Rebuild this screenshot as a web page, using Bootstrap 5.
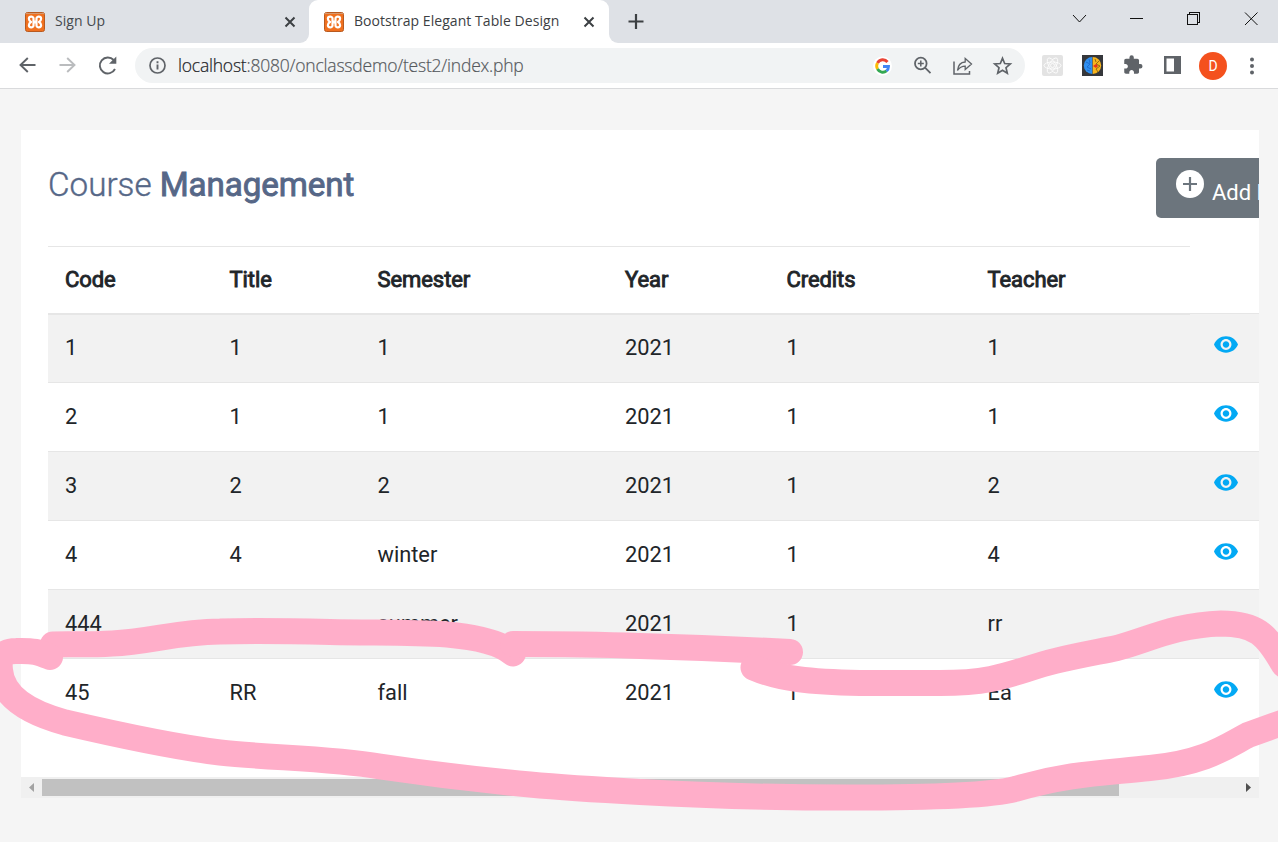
<!DOCTYPE html>
<html lang="en">
<head>
<meta charset="utf-8">
<title>Bootstrap Elegant Table Design</title>
<link href="https://cdn.jsdelivr.net/npm/bootstrap@5.3.0/dist/css/bootstrap.min.css" rel="stylesheet">
<style>
  html, body { height: 100%; }
  body { background: #f5f5f5; overflow: hidden; font-family: Roboto, sans-serif; color: #212529; }
  svg { display: block; flex: none; }
  .tabstrip { height: 43px; background: #dee1e6; font: 14px/20px "Open Sans", "Noto Sans", sans-serif; color: #45494d; }
  .tab-item { height: 43px; padding-top: 1px; }
  .tab-first { width: 309px; padding-left: 25px; padding-right: 13px; border-radius: 0 0 9px 0; }
  .tab-active { width: 300px; padding-left: 15px; padding-right: 14px; background: #fff; border-radius: 9px 9px 0 0; color: #3c4043; }
  .tab-foot { background: #fff; }
  .tab-foot-r { background: #fff; flex: 1; }
  .tab-rest { height: 43px; background: #dee1e6; border-radius: 0 0 0 9px; padding-left: 19px; }
  .tab-label { margin: -2px 0 0 10px; white-space: nowrap; letter-spacing: .06px; }
  .toolbar { height: 46px; background: #fff; border-bottom: 1px solid #d9dadc; padding-left: 18px; }
  .omnibox { width: 890px; height: 35px; border-radius: 18px; background: #f1f3f4; margin-left: 16px; padding: 0 12px 0 14px; }
  .url { font: 300 17.5px/24px "Open Sans", "Noto Sans", sans-serif; letter-spacing: -.21px; color: #55595d; margin: -1px 0 0 12px; white-space: nowrap; -webkit-text-stroke: .2px currentColor; }
  .url b { font-weight: 300; color: #202124; }
  .avatar { width: 28px; height: 28px; border-radius: 50%; background: #f4511e; color: #fff; font: 14px/28px Roboto, sans-serif; }
  .panel { width: 1238px; margin: 41px 0 0 21px; overflow: hidden; }
  .panel-body { height: 647px; padding: 28px 0 0 27px; background: #fff; overflow: hidden; }
  .title-row { height: 88px; width: 1300px; }
  .title-row h2 { font-size: 33.2px; line-height: 41px; color: #566787; margin: 6px 0 0 0; width: 1108px; white-space: nowrap; font-weight: 300; -webkit-text-stroke: .4px currentColor; }
  .title-row h2 b, .course-table th { font-weight: 400; -webkit-text-stroke: .9px currentColor; }
  .title-row h2 b { letter-spacing: -.1px; }
  .add-btn { width: 170px; height: 60px; background: #6c757d; border-radius: 5px; color: #fff; font-size: 22px; line-height: 30px; padding: 12px 0 0 20px; }
  .add-btn span { margin: 8px 0 0 8px; white-space: nowrap; }
  .course-table { table-layout: fixed; width: 1290px; font-size: 21.8px; line-height: 30px; margin: 0; border-collapse: separate; border-spacing: 0; }
  .course-table th, .course-table td { padding: 0 0 0 17px; vertical-align: middle; border: 0; border-top: 1px solid #e6e6e6; }
  .course-table thead th { height: 67px; font-size: 22px; letter-spacing: -.08px; }
  .course-table thead th:last-child { border-top-color: transparent; }
  .course-table td { height: 69px; }
  .course-table tbody tr:first-child td:not(:last-child) { border-top-width: 2px; padding-bottom: 2px; }
  .course-table tbody tr:nth-child(odd) td { background: #f2f2f2; }
  .course-table td svg { margin: -8px 0 0 7px; }
  .hscroll { height: 21px; background: #f0f0f0; }
  .thumb { width: 1077px; height: 17px; background: #c1c1c1; }
  .marker { left: 0; top: 0; pointer-events: none; }
</style>
</head>
<body>
<svg width="0" height="0" class="position-absolute">
  <defs>
    <symbol id="xampp" viewBox="0 0 20 20">
      <rect x=".5" y=".5" width="19" height="19" rx="2" fill="#f0701f" stroke="#b85a20"/>
      <path d="M1 1.500h18" stroke="#d79a70"/>
      <path d="M8.500 9.500V6.500C8.500 4 3.900 4.100 3.900 6.800c0 1.700 1 2.600 2.200 3.200-1.200.6-2.200 1.500-2.200 3.200 0 2.700 4.600 2.800 4.600.3V10.500h3v3c0 2.500 4.600 2.400 4.600-.3 0-1.700-1-2.600-2.200-3.200 1.200-.6 2.200-1.500 2.200-3.200 0-2.700-4.600-2.800-4.600-.3v3z" fill="none" stroke="#fff" stroke-width="2.200" stroke-linecap="round" stroke-linejoin="round"/>
    </symbol>
    <symbol id="cross" viewBox="0 0 12 12"><path d="M1.500 1.500l9 9m0-9l-9 9" stroke="#3c4043" stroke-width="2"/></symbol>
    <symbol id="eye" viewBox="1 4.500 22 15"><path fill="#03a9f4" d="M12 4.500C7 4.500 2.730 7.610 1 12c1.730 4.390 6 7.500 11 7.500s9.270-3.110 11-7.500c-1.730-4.390-6-7.500-11-7.500zM12 17c-2.760 0-5-2.240-5-5s2.240-5 5-5 5 2.240 5 5-2.240 5-5 5zm0-8c-1.660 0-3 1.340-3 3s1.340 3 3 3 3-1.340 3-3-1.340-3-3-3z"/></symbol>
  </defs>
</svg>

<header>
  <div class="tabstrip d-flex">
    <div class="tab-foot"><div class="tab-item tab-first d-flex align-items-center tabstrip">
      <svg width="20" height="20"><use href="#xampp"/></svg><span class="tab-label">Sign Up</span>
      <svg class="ms-auto" width="12" height="12"><use href="#cross"/></svg>
    </div></div>
    <div class="tab-item tab-active d-flex align-items-center">
      <svg width="20" height="20"><use href="#xampp"/></svg><span class="tab-label">Bootstrap Elegant Table Design</span>
      <svg class="ms-auto" width="12" height="12"><use href="#cross"/></svg>
    </div>
    <div class="tab-foot-r">
      <div class="tab-rest d-flex">
        <svg width="16" height="43" viewBox="0 0 16 43"><path d="M8 14v15M.5 21.500h15" stroke="#3c4043" stroke-width="2.200"/></svg>
        <svg class="ms-auto" width="206" height="43" viewBox="1072 0 206 43" fill="none" stroke="#111">
          <path d="M1073 15l6.500 7 6.500-7M1245 12.500l12.500 12.500m0-12.500L1245 25"/>
          <path d="M1130 18.500h13M1187.500 14.500h10v10h-10zM1189.500 14.500v-2h10v10h-2" shape-rendering="crispEdges"/>
        </svg>
      </div>
    </div>
  </div>

  <div class="toolbar d-flex align-items-center">
    <svg width="101" height="44" viewBox="18 44 101 44" fill="none" stroke="#5f6368" stroke-width="1.900">
      <path d="M35.500 65H21m6.800-7L20.500 65l7.300 7"/>
      <path d="M59.500 65H74m-6.800-7l7.300 7-7.300 7" stroke="#babcbe"/>
      <path d="M115 69a8 8 0 1 1-1.300-9"/><path d="M116.300 56.500v7.300H109z" fill="#5f6368" stroke="none"/>
    </svg>
    <div class="omnibox d-flex align-items-center">
      <svg width="17" height="17" viewBox="0 0 17 17"><circle cx="8.500" cy="8.500" r="7.500" fill="none" stroke="#5f6368" stroke-width="1.700"/><path d="M8.500 7.500v5M8.500 4.200v2" stroke="#5f6368" stroke-width="1.900"/></svg>
      <span class="url"><b>localhost</b>:8080/onclassdemo/test2/index.php</span>
      <svg class="ms-auto" width="140" height="34" viewBox="873 49 140 34">
        <circle cx="882.500" cy="66" r="9.500" fill="#fff"/>
        <g fill="none" stroke-width="2.900"><path d="M887.500 62a6 6 0 0 0-10 1" stroke="#ea4335"/><path d="M877.500 63a6 6 0 0 0 0 6" stroke="#fbbc05"/><path d="M877.500 69a6 6 0 0 0 9 1.900" stroke="#34a853"/><path d="M886.500 71a6 6 0 0 0 2-4.500H883" stroke="#4285f4"/></g>
        <g fill="none" stroke="#5f6368" stroke-width="1.800">
          <circle cx="920.800" cy="63.500" r="5.800"/><path d="M925 67.700l5.500 5.500"/><path d="M917.800 63.500h6m-3-3v6" stroke-width="1.500"/>
          <path d="M954 61.500v12.500h15.500v-3" stroke-width="1.500"/><path d="M957.500 70.500c.5-5.500 3.500-8.300 7.700-8.500v-3.500l6.300 5.500-6.300 5.500v-3.300c-3.500 0-5.700 1.300-7.700 4.300z" stroke-width="1.300"/>
          <path d="M1002.500 58.300l2.200 5.200 5.600.5-4.300 3.700 1.300 5.500-4.800-2.900-4.800 2.900 1.300-5.500-4.300-3.700 5.600-.5z" stroke-width="1.700"/>
        </g>
      </svg>
    </div>
    <svg width="174" height="34" viewBox="1025 49 174 34">
      <rect x="1042" y="55" width="21" height="21" rx="2" fill="#e3e3e3"/>
      <g fill="none" stroke="#fff" stroke-width=".8"><ellipse cx="1052.500" cy="65.500" rx="8.500" ry="3.500"/><ellipse cx="1052.500" cy="65.500" rx="8.500" ry="3.500" transform="rotate(60 1052.500 65.500)"/><ellipse cx="1052.500" cy="65.500" rx="8.500" ry="3.500" transform="rotate(120 1052.500 65.500)"/><circle cx="1052.500" cy="65.500" r="2"/></g>
      <rect x="1082" y="55" width="21" height="21" fill="#35373b"/>
      <path d="M1092.300 57a8.500 8.500 0 0 0 0 17z" fill="#2f8ff0"/><path d="M1092.700 57a8.500 8.500 0 0 1 0 17z" fill="#f8b51c"/>
      <path d="M1086 62l4 2-3 3 4 2M1089 59l1 4M1087 70l3 1" fill="none" stroke="#1a66c8" stroke-width=".8"/>
      <path d="M1099 61l-3 3 4 2-4 3 2 3M1095 59l1 3" fill="none" stroke="#7a5a10" stroke-width=".8"/><path d="M1093 66l3-2 2 2-2 2z" fill="#e8341c"/>
      <path transform="translate(1122.500 54.500) scale(.87)" fill="#5f6368" d="M20.500 11H19V7c0-1.100-.9-2-2-2h-4V3.500a2.500 2.500 0 0 0-5 0V5H4c-1.100 0-1.990.9-1.990 2v3.800H3.500c1.490 0 2.700 1.210 2.700 2.700s-1.210 2.700-2.700 2.700H2V20c0 1.100.9 2 2 2h3.800v-1.500c0-1.490 1.210-2.700 2.700-2.700s2.700 1.210 2.700 2.700V22H17c1.100 0 2-.9 2-2v-4h1.500a2.500 2.500 0 0 0 0-5z"/>
      <path d="M1164 56h17v18h-17zM1166.500 58.500v13h7.500v-13z" fill="#5f6368" fill-rule="evenodd"/>
    </svg>
    <div class="avatar text-center">D</div>
    <svg class="ms-auto me-4" width="4" height="18" viewBox="0 0 4 18" fill="#5f6368"><circle cx="2" cy="2.500" r="2"/><circle cx="2" cy="9" r="2"/><circle cx="2" cy="15.500" r="2"/></svg>
  </div>
</header>

<main class="panel">
  <div class="panel-body">
    <div class="title-row d-flex">
      <h2>Course <b>Management</b></h2>
      <div class="add-btn d-flex align-items-start">
        <svg width="28" height="28" viewBox="0 0 28 28"><circle cx="14" cy="14" r="14" fill="#fff"/><path d="M14 7v14M7 14h14" stroke="#6c757d" stroke-width="2.200"/></svg>
        <span>Add New</span>
      </div>
    </div>
    <table class="course-table">
      <colgroup><col style="width:164.500px"><col style="width:148px"><col style="width:247.500px"><col style="width:161.500px"><col style="width:201px"><col style="width:219px"><col></colgroup>
      <thead><tr><th>Code</th><th>Title</th><th>Semester</th><th>Year</th><th>Credits</th><th>Teacher</th><th></th></tr></thead>
      <tbody>
        <tr><td>1</td><td>1</td><td>1</td><td>2021</td><td>1</td><td>1</td><td><svg width="24" height="17"><use href="#eye"/></svg></td></tr>
        <tr><td>2</td><td>1</td><td>1</td><td>2021</td><td>1</td><td>1</td><td><svg width="24" height="17"><use href="#eye"/></svg></td></tr>
        <tr><td>3</td><td>2</td><td>2</td><td>2021</td><td>1</td><td>2</td><td><svg width="24" height="17"><use href="#eye"/></svg></td></tr>
        <tr><td>4</td><td>4</td><td>winter</td><td>2021</td><td>1</td><td>4</td><td><svg width="24" height="17"><use href="#eye"/></svg></td></tr>
        <tr><td>444</td><td></td><td>summer</td><td>2021</td><td>1</td><td>rr</td><td><svg width="24" height="17"><use href="#eye"/></svg></td></tr>
        <tr><td>45</td><td>RR</td><td>fall</td><td>2021</td><td>1</td><td>Ea</td><td><svg width="24" height="17"><use href="#eye"/></svg></td></tr>
      </tbody>
    </table>
  </div>
  <div class="hscroll d-flex align-items-center">
    <svg width="21" height="21"><path d="M13 6v9l-5-4.500z" fill="#a3a3a3"/></svg>
    <div class="thumb"></div>
    <svg class="ms-auto" width="21" height="21"><path d="M8 6v9l5-4.500z" fill="#505050"/></svg>
  </div>
</main>

<!-- freehand highlight around the last course -->
<svg class="marker position-absolute" width="1278" height="842" fill="none" stroke="#ffaec9" stroke-width="26" stroke-linecap="round" stroke-linejoin="round">
  <path d="M53 644.500C70 644 90 645 112 643.500C150 642 175 632 220 631.500C250 630.500 290 631 330 632C375 633 410 632 447 634.500C475 637 500 642 513 653.500"/>
  <path d="M513 644C560 644 600 644.500 640 646Q715 648 790 652"/>
  <path d="M753.500 667.500C780 679 810 682 860 683L940 683C1000 683 1015 671 1055 661C1080 655 1098 652 1117 648C1150 639 1175 625 1221 623.500C1256 624 1266 633 1284 665"/>
  <path d="M1290 720L1248 735C1227 746 1205 763 1150 768C1105 773 1070 773 1015 789C985 797 900 797.500 850 797.500C780 797.500 710 796 640 792C603 790 567 788 530 784.500C480 780 430 774 380 766.500C330 758 270 758 220 752.500C175 747 110 733 65 722.500C30 713 2 698 0 670C-2 655 6 651 16 651C35 650.500 38 652 50 657"/>
</svg>
<script src="https://cdn.jsdelivr.net/npm/bootstrap@5.3.0/dist/js/bootstrap.bundle.min.js"></script>
</body>
</html>
